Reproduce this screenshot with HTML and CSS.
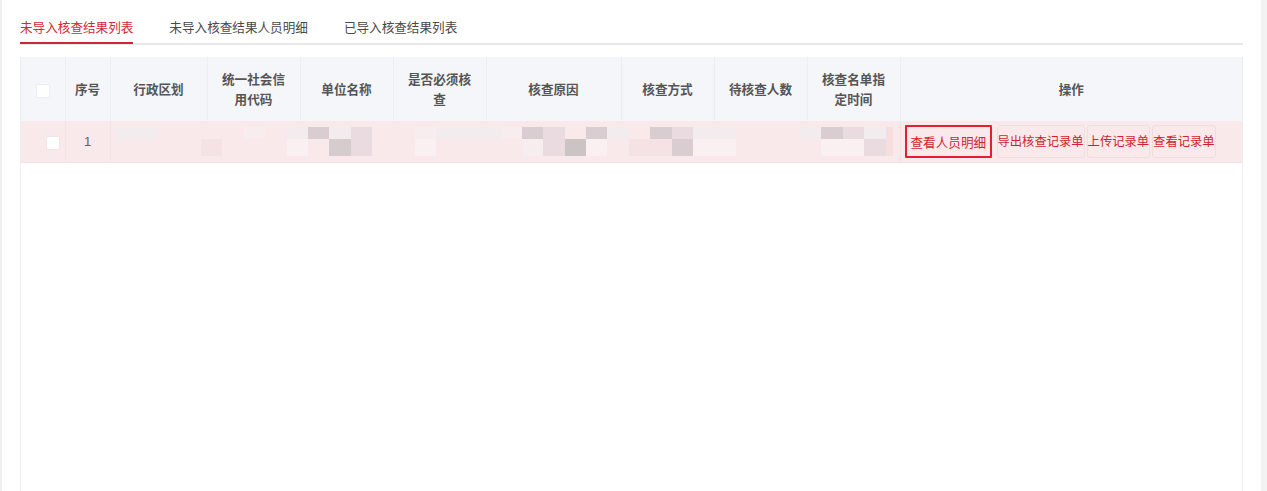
FILE: index.html
```html
<!DOCTYPE html>
<html lang="zh-CN">
<head>
<meta charset="utf-8">
<title>核查结果</title>
<link rel="stylesheet" href="styles.css">
</head>
<body>
<div class="page">
  <main class="panel">
    <nav class="tabs">
      <span class="tab active">未导入核查结果列表</span>
      <span class="tab">未导入核查结果人员明细</span>
      <span class="tab">已导入核查结果列表</span>
    </nav>

    <div class="table-wrap">
      <table class="grid">
        <colgroup>
          <col class="c-check"><col class="c-no"><col class="c-area"><col class="c-md">
          <col class="c-md"><col class="c-md"><col class="c-reason"><col class="c-md">
          <col class="c-md"><col class="c-md"><col>
        </colgroup>
        <thead>
          <tr>
            <th class="th-check"><span class="checkbox"></span></th>
            <th class="th-no">序号</th>
            <th>行政区划</th>
            <th>统一社会信用代码</th>
            <th>单位名称</th>
            <th>是否必须核查</th>
            <th>核查原因</th>
            <th>核查方式</th>
            <th>待核查人数</th>
            <th>核查名单指定时间</th>
            <th>操作</th>
          </tr>
        </thead>
        <tbody>
          <tr class="row-current">
            <td class="td-check"><span class="checkbox"></span></td>
            <td class="num">1</td>
            <td class="masked" colspan="8">
              <div class="mosaic">
                <i class="a"></i><i class="a"></i><i class="p"></i><i class="p"></i><i class="p"></i><i class="p"></i><i class="s"></i><i class="p"></i><i class="a"></i><i class="d"></i><i class="a"></i><i class="m"></i><i class="p"></i><i class="p"></i><i class="s"></i><i class="a"></i><i class="a"></i><i class="a"></i><i class="s"></i><i class="d"></i><i class="m"></i><i class="p"></i><i class="d"></i><i class="a"></i><i class="p"></i><i class="d"></i><i class="m"></i><i class="a"></i><i class="a"></i><i class="p"></i><i class="p"></i><i class="p"></i><i class="a"></i><i class="d"></i><i class="m"></i><i class="a"></i><i class="r"></i>
                <i class="p"></i><i class="p"></i><i class="p"></i><i class="p"></i><i class="q"></i><i class="p"></i><i class="p"></i><i class="p"></i><i class="l"></i><i class="p"></i><i class="dd"></i><i class="m"></i><i class="p"></i><i class="p"></i><i class="l"></i><i class="p"></i><i class="p"></i><i class="p"></i><i class="p"></i><i class="s"></i><i class="m"></i><i class="dk"></i><i class="l"></i><i class="p"></i><i class="q"></i><i class="q"></i><i class="d"></i><i class="l"></i><i class="l"></i><i class="p"></i><i class="p"></i><i class="p"></i><i class="p"></i><i class="l"></i><i class="l"></i><i class="m"></i><i class="r"></i>
              </div>
            </td>
            <td class="ops">
              <div class="actions">
                <button class="btn focused">查看人员明细</button>
                <button class="btn">导出核查记录单</button>
                <button class="btn">上传记录单</button>
                <button class="btn">查看记录单</button>
              </div>
            </td>
          </tr>
        </tbody>
      </table>
    </div>
  </main>
  <div class="scroll-track"></div>
</div>
</body>
</html>
```

FILE: styles.css
```css
* { box-sizing: border-box; }

html, body {
  margin: 0;
  height: 100%;
  overflow: hidden;
  background: #f0f0f0;
  font-family: "Noto Sans CJK SC", "Noto Sans", sans-serif;
  font-size: 12.6px;
  color: #606266;
}

.page {
  display: flex;
  height: 100%;
  padding-left: 2px;
}

.panel {
  flex: 1;
  display: flex;
  flex-direction: column;
  background: #fff;
  padding: 0 18px;
  min-width: 0;
}

.scroll-track {
  width: 6px;
  background: #f3f3f3;
}

/* tabs */
.tabs {
  display: flex;
  gap: 36px;
  border-bottom: 2px solid #e6e8ee;
  height: 45px;
  flex: none;
}

.tab {
  position: relative;
  padding-top: 11px;
  line-height: 32px;
  color: #4a4a4a;
  white-space: nowrap;
}

.tab.active { color: #d6283a; }

.tab.active::after {
  content: "";
  position: absolute;
  left: 0;
  right: 0;
  bottom: -1px;
  height: 2px;
  background: #cf2536;
}

/* table */
.table-wrap {
  flex: 1;
  margin-top: 12px;
  border-left: 1px solid #ebeef5;
  border-right: 1px solid #ebeef5;
}

.grid {
  width: 100%;
  table-layout: fixed;
  border-collapse: collapse;
}

.c-check { width: 44px; }
.c-no { width: 45px; }
.c-area { width: 97px; }
.c-md { width: 93px; }
.c-reason { width: 135px; }

.grid th {
  background: #f5f6fa;
  height: 64px;
  padding: 0 10px;
  font-weight: 700;
  color: #555;
  line-height: 20px;
  text-align: center;
  border-right: 1px solid #ebeef5;
}

.grid th:last-child { border-right: 0; }

.grid th.th-check,
.grid th.th-no { padding: 0; white-space: nowrap; }

.checkbox {
  display: inline-block;
  width: 14px;
  height: 14px;
  background: #fff;
  border: 1px solid #eceef2;
  border-radius: 2px;
  vertical-align: middle;
}

.grid td {
  height: 41px;
  padding: 0;
  border-bottom: 1px solid #f1e2e4;
  border-right: 1px solid #f4e2e5;
  vertical-align: middle;
}

.row-current td { background: #fae9eb; }

.grid td.td-check { padding-left: 25px; }

.td-check .checkbox { border-color: #f3e6e8; }

.num {
  text-align: center;
  font-family: "Liberation Sans", sans-serif;
  font-size: 13px;
}

.grid td.masked {
  padding-left: 5px;
  overflow: hidden;
}

/* blurred cell contents, rendered as a coarse pixel grid */
.mosaic {
  display: grid;
  grid-template-columns: repeat(36, 21.4px) 7px;
  grid-template-rows: 12px 17px;
  margin-top: 1px;
}

.mosaic i { display: block; }
.mosaic .p { background: transparent; }
.mosaic .s { background: #f7ecee; }
.mosaic .a { background: #f3ecef; }
.mosaic .l { background: #faf0f1; }
.mosaic .q { background: #f4e2e5; }
.mosaic .m { background: #e9dbdf; }
.mosaic .d { background: #dacdd1; }
.mosaic .dd { background: #d6cbcd; }
.mosaic .dk { background: #cbc3c4; }
.mosaic .r { background: #f6dde0; }

.grid td.ops { border-right: 0; }

.actions {
  display: flex;
  align-items: center;
  padding-left: 4px;
}

.btn {
  height: 33px;
  padding: 0;
  margin-right: 2px;
  background: transparent;
  border: 1px solid #efdde0;
  border-radius: 3px;
  font-family: inherit;
  font-size: 12.3px;
  color: #d31f2f;
  white-space: nowrap;
}

.btn.focused {
  padding: 0 4px;
  margin-right: 5px;
  border: 2px solid #e3202f;
  border-radius: 1px;
  width: 87px;
  font-size: 12.6px;
}
```
